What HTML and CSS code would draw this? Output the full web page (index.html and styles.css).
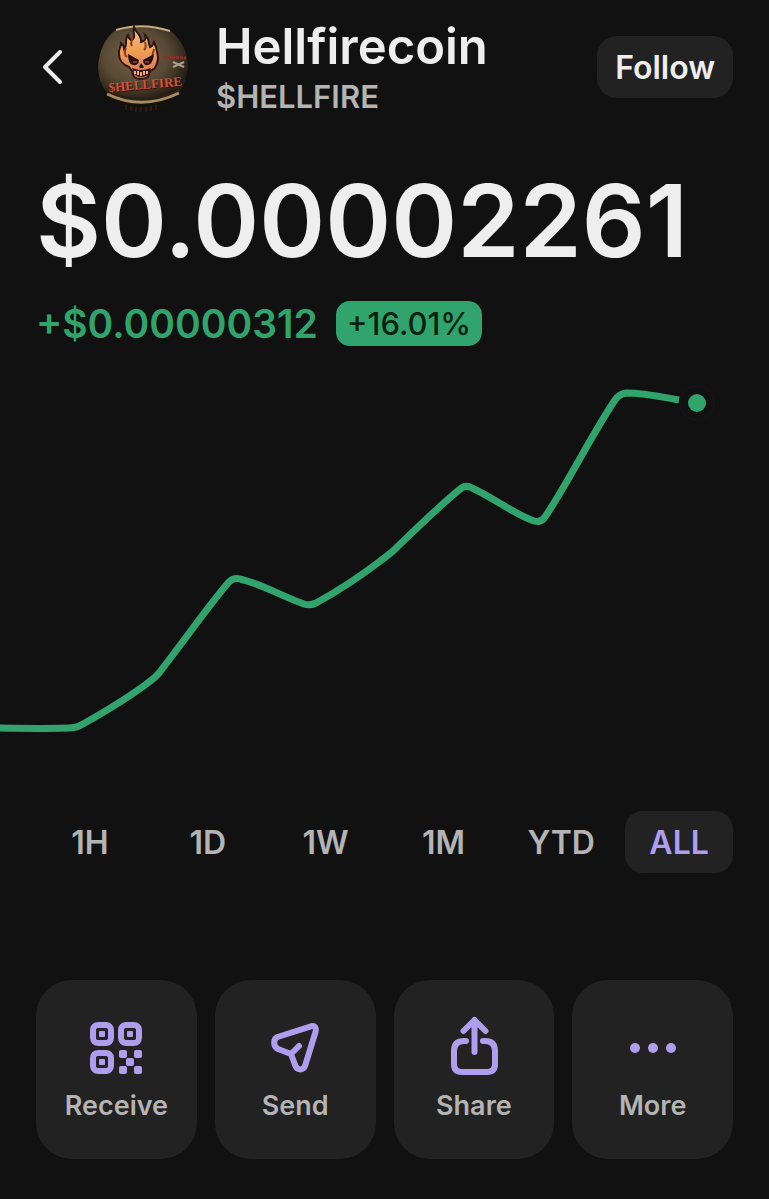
FILE: index.html
```
<!DOCTYPE html>
<html lang="en">
<head>
  <meta charset="utf-8">
  <meta name="viewport" content="width=device-width, initial-scale=1">
  <title>Hellfirecoin</title>
  <link rel="stylesheet" href="styles.css">
</head>
<body>
  <header class="header">
    <button type="button" class="back" aria-label="Back">
      <svg width="24" height="38" viewBox="0 0 24 38"><path d="M20 4 5 19l15 15"/></svg>
    </button>
    <svg class="avatar" viewBox="0 0 90 92" role="img" aria-label="Hellfirecoin logo">
      <defs>
        <radialGradient id="leather" cx="42%" cy="40%" r="62%">
          <stop offset="0" stop-color="#77654a"/>
          <stop offset=".6" stop-color="#574834"/>
          <stop offset="1" stop-color="#241b13"/>
        </radialGradient>
        <linearGradient id="flame" x1="0" y1="0" x2="0" y2="1">
          <stop offset="0" stop-color="#f3c398"/>
          <stop offset=".45" stop-color="#f0a050"/>
          <stop offset=".75" stop-color="#e08560"/>
          <stop offset="1" stop-color="#c8604c"/>
        </linearGradient>
      </defs>
      <path d="M17 9Q45-7 72 9Q90 25 90 47Q88 66 81 74Q63 92 45 91Q25 91 8 74Q0 60 0 45Q2 22 17 9Z" fill="#16110d"/>
      <path d="M16 10Q45 1 73 10Q90 25 90 47Q88 62 82 70Q45 89 8 71Q0 60 0 45Q2 22 16 10Z" fill="url(#leather)"/>
      <path d="M18 9Q44 1 72 10" fill="none" stroke="#c7ad83" stroke-width="2"/>
      <path d="M8 70Q44 87 82 69" fill="none" stroke="#292016" stroke-width="2"/>
      <path d="M9 73Q44 90 81 72" fill="none" stroke="#a78b63" stroke-width="3"/>
      <path d="M28 84v5M33 85v5M38 86v5M43 86v5M48 86v5M53 85v5M58 84v5" stroke="#3c2a1e"/>
      <path d="M31 46C25 44 21 39 21 33C20 28 23 27 23 22Q26 24 26 28C30 25 26 18 30 14Q31 19 34 19C39 16 34 11 36 6C38 13 44 13 43 21Q49 20 47 14C52 18 50 22 52 26Q55 25 56 21C59 27 59 31 60 36Q60 43 56 48L52 50L50 56Q43 60 36 56L34 50Z" fill="url(#flame)" stroke="#301611" stroke-width="2"/>
      <path d="M28 27q-3 6 1 9M35 17q-3 5-1 8M47 21q2 5-1 8M56 28q-1 5-2 6" fill="none" stroke="#8a3b24" stroke-width="2"/>
      <path d="M30 33l11 6q0 6-6 5-5-1-5-11zM56 33l-11 6q0 6 5 5 5-1 6-11z" fill="#27100e"/>
      <path d="m35 41 4 0m8 0 4 0" stroke="#cf6143" stroke-width="1"/>
      <path d="m41 46 2-4 3 4-1 1h-3z" fill="#27100e"/>
      <path d="M34 47q9 4 19 0l-3 7q-7 4-13 0z" fill="#34130f"/>
      <path d="M37 50v3M40 50v4M43 51v4M46 50v4M49 50v3" stroke="#efad8b" stroke-width="2"/>
      <text class="coin-shadow" x="12" y="72" transform="rotate(-5 12 72)">$HELLFIRE</text>
      <text class="coin-text" x="11" y="71" transform="rotate(-5 11 71)">$HELLFIRE</text>
      <path d="M66 36l22 1" stroke="#813628" stroke-width="3" stroke-dasharray="3 1"/>
      <path d="m75 41 11 5m-11 0 11-5" stroke="#aaa18e" stroke-width="2"/>
    </svg>
    <div class="coin">
      <h1 class="name">Hellfirecoin</h1>
      <div class="ticker">$HELLFIRE</div>
    </div>
    <button type="button" class="follow">Follow</button>
  </header>

  <main>
    <section class="quote">
      <div class="price">$0.00002261</div>
      <div class="change">
        <span class="amount">+$0.00000312</span>
        <span class="percent">+16.01%</span>
      </div>
    </section>

    <svg class="chart" viewBox="0 370 769 380" role="img" aria-label="Price chart">
      <path class="line" d="M-4 728C30 728.500 60 729 74 727.500Q78 727 83 724C108 710 132 695 149 682Q155 678 159 673C181 645 206 609 228 583Q233 577 240 579C262 584 283 597 304 604Q310 606 316 603C340 590 366 572 383 559Q388 555 393 551C415 530 438 507 459 490Q465 484 472 488C494 498 512 513 534 521Q541 523 545 517C568 483 592 434 615 400Q619 394 626 393C644 393 662 397 679 400"/>
      <circle class="halo" cx="697" cy="403" r="17"/>
      <circle class="dot" cx="697" cy="403" r="9"/>
    </svg>

    <div class="ranges">
      <button type="button">1H</button>
      <button type="button">1D</button>
      <button type="button">1W</button>
      <button type="button">1M</button>
      <button type="button">YTD</button>
      <button type="button" class="active">ALL</button>
    </div>

    <div class="actions">
      <button type="button">
        <svg viewBox="0 0 64 64">
          <g class="stroke">
            <rect x="9" y="9" width="18" height="18" rx="5"/>
            <rect x="37" y="9" width="18" height="18" rx="5"/>
            <rect x="9" y="37" width="18" height="18" rx="5"/>
          </g>
          <g class="fill">
            <rect x="15" y="15" width="6" height="6" rx="1"/>
            <rect x="43" y="15" width="6" height="6" rx="1"/>
            <rect x="15" y="43" width="6" height="6" rx="1"/>
            <rect x="35" y="34" width="8" height="8" rx="2"/>
            <rect x="50" y="34" width="8" height="8" rx="2"/>
            <rect x="42" y="42" width="8" height="8" rx="2"/>
            <rect x="35" y="50" width="8" height="8" rx="2"/>
            <rect x="50" y="50" width="8" height="8" rx="2"/>
          </g>
        </svg>
        <span>Receive</span>
      </button>
      <button type="button">
        <svg viewBox="0 0 64 64">
          <path class="stroke" d="M14.500 21 48 10.300Q54 9 52.500 16L42 50C40 54.500 34.500 54.500 32.500 50L28 38 15 33C10 30.500 10 23 14.500 21ZM28 38l8-8"/>
        </svg>
        <span>Send</span>
      </button>
      <button type="button">
        <svg viewBox="0 0 64 64">
          <path class="stroke" d="M32.500 36V4M21.500 15 32.500 4l11 11M24 25h-2q-10 0-10 10v13q0 8 8 8h25q8 0 8-8V35q0-10-10-10h-2"/>
        </svg>
        <span>Share</span>
      </button>
      <button type="button">
        <svg viewBox="0 0 64 64">
          <g class="fill"><circle cx="14" cy="32" r="5"/><circle cx="32" cy="32" r="5"/><circle cx="50" cy="32" r="5"/></g>
        </svg>
        <span>More</span>
      </button>
    </div>
  </main>
</body>
</html>
```
FILE: styles.css
```
* {
  box-sizing: border-box;
}
body {
  margin: 0;
  background: #111;
  color: #eee;
  font-family: Inter, sans-serif;
  font-weight: 600;
}
button {
  border: none;
  background: none;
  color: inherit;
  font: inherit;
  padding: 0;
  cursor: pointer;
}
.header {
  display: flex;
  align-items: center;
  padding: 17px 36px 0;
}
.back {
  display: flex;
  width: 62px;
  padding-left: 4px;
}
.back path {
  fill: none;
  stroke: #eee;
  stroke-width: 4;
  stroke-linecap: round;
  stroke-linejoin: round;
}
.avatar {
  width: 90px;
  height: 92px;
}
.coin-text,
.coin-shadow {
  font: bold 13px "Liberation Serif", serif;
  fill: #d2533c;
}
.coin-shadow {
  fill: #30130d;
}
.coin {
  flex: 1;
  padding-left: 28px;
}
.name {
  margin: 0;
  font-size: 49px;
  line-height: 60px;
  font-weight: 600;
}
.ticker {
  font-size: 31px;
  line-height: 40px;
  color: #b4b4b4;
}
.follow {
  height: 62px;
  padding: 0 18px;
  border-radius: 20px;
  background: #222;
  font-size: 32px;
}
.quote {
  padding: 44px 36px 0;
}
.price {
  font-size: 100px;
  line-height: 120px;
}
.change {
  display: flex;
  align-items: center;
  gap: 18px;
  padding-top: 20px;
}
.amount {
  font-size: 39px;
  line-height: 45px;
  color: #30a46c;
}
.percent {
  padding: 0 11px;
  border-radius: 14px;
  background: #30a46c;
  color: #05230f;
  font-size: 31px;
  line-height: 45px;
  font-weight: 500;
}
.chart {
  display: block;
  width: 100%;
  margin-top: 24px;
}
.line {
  fill: none;
  stroke: #30a46c;
  stroke-width: 7;
}
.halo {
  fill: #111;
  stroke: #171717;
}
.dot {
  fill: #30a46c;
}
.ranges {
  display: grid;
  grid-template-columns: repeat(6, 1fr);
  gap: 10px;
  padding: 61px 36px 0;
}
.ranges button {
  height: 62px;
  border-radius: 18px;
  color: #b4b4b4;
  font-size: 32px;
}
.ranges .active {
  background: #222;
  color: #ae9fee;
}
.actions {
  display: grid;
  grid-template-columns: repeat(4, 1fr);
  gap: 18px;
  padding: 107px 36px 40px;
}
.actions button {
  display: flex;
  flex-direction: column;
  align-items: center;
  padding: 36px 0;
  border-radius: 36px;
  background: #222;
  color: #b4b4b4;
  font-size: 27px;
  line-height: 34px;
}
.actions svg {
  width: 64px;
  height: 64px;
  margin-bottom: 9px;
}
.stroke {
  fill: none;
  stroke: #ae9fee;
  stroke-width: 6;
  stroke-linecap: round;
  stroke-linejoin: round;
}
.fill {
  fill: #ae9fee;
}
```
